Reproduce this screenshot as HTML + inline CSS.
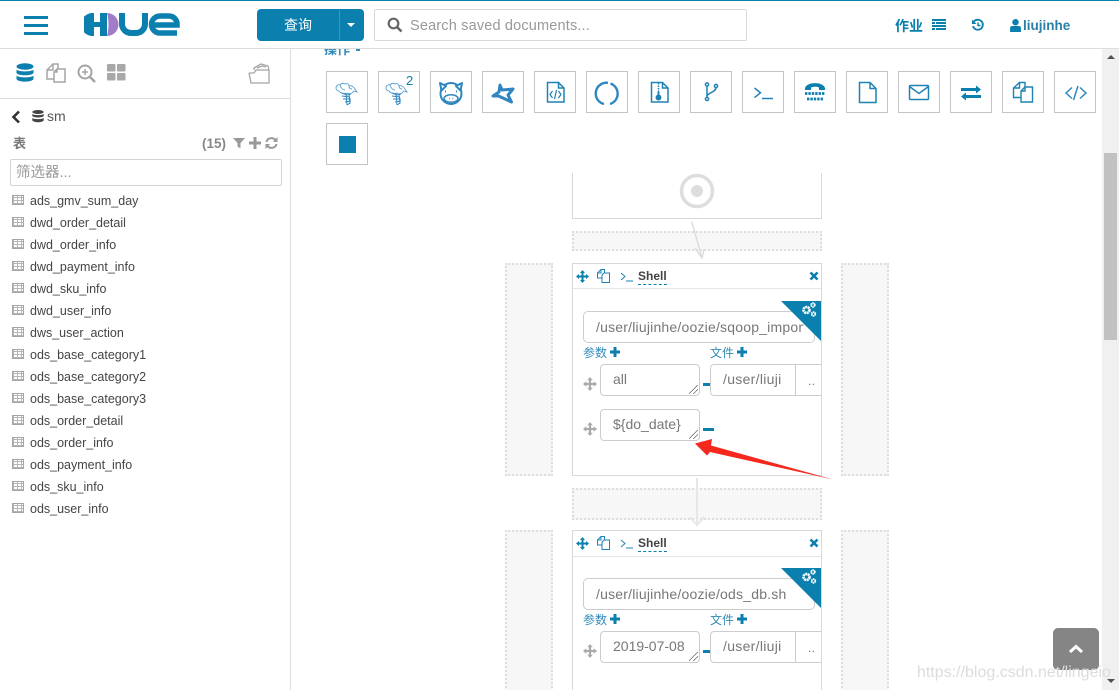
<!DOCTYPE html>
<html><head><meta charset="utf-8"><style>
*{box-sizing:border-box}
html,body{margin:0;padding:0;width:1119px;height:690px;overflow:hidden;background:#fff;font-family:"Liberation Sans","Noto Sans CJK SC",sans-serif;color:#666}
#wrap{position:absolute;left:0;top:0;width:1119px;height:690px;overflow:hidden;background:#fff}
.a{position:absolute}
.t{position:absolute;white-space:nowrap}
.btn{position:absolute;width:42px;height:42px;border:1px solid #c4c4c4;background:#fff}
.btn svg{position:absolute;left:0;top:0}
.row{position:absolute;left:30px;font-size:12.5px;color:#444;white-space:nowrap;line-height:16px}
.tb{position:absolute;left:12px;width:12px;height:10px;border:1px solid #a5a5a5;background:repeating-linear-gradient(0deg,#b5b5b5 0 1px,transparent 1px 3px),repeating-linear-gradient(90deg,#b5b5b5 0 1px,transparent 1px 4px)}
.dash{position:absolute;background:#f7f7f7;border:2px dotted #ddd}
.card{position:absolute;left:572px;width:250px;background:#fff;border:1px solid #d8d8d8;overflow:hidden}
.inp{position:absolute;background:#fff;border:1px solid #ccc;border-radius:4px;font-size:14px;color:#777;white-space:nowrap;overflow:hidden}
.grip{position:absolute;width:9px;height:9px;background:linear-gradient(135deg,transparent 45%,#666 45% 52%,transparent 52% 70%,#666 70% 77%,transparent 77%)}
.lbl{position:absolute;font-size:12px;color:#338bb8;white-space:nowrap}
.blue{color:#0b7fad}
</style></head><body><div id="wrap">

<!-- top bar -->
<div class="a" style="left:0;top:0;width:1119px;height:1px;background:#0b7fad"></div>
<div class="a" style="left:0;top:48px;width:1119px;height:1px;background:#ddd"></div>
<div class="a" style="left:24px;top:16px;width:24px;height:3px;background:#0b7fad"></div>
<div class="a" style="left:24px;top:24px;width:24px;height:3px;background:#0b7fad"></div>
<div class="a" style="left:24px;top:32px;width:24px;height:3px;background:#0b7fad"></div>

<!-- logo -->
<svg class="a" style="left:84px;top:13px" width="96" height="23" viewBox="0 0 96 23">
<path d="M10 .1A11.500 11.500 0 1 0 10 22.900Z" fill="#0b7fad"/>
<rect x="9" y="9" width="9" height="5" fill="#0b7fad"/>
<rect x="16" y="0" width="7" height="23" fill="#0b7fad"/>
<path d="M23 0A11.500 11.500 0 0 1 23 23C25 16 25 7 23 0Z" fill="#a27cc8"/>
<path d="M38 0V11A9 9 0 0 0 47 20H52A9 9 0 0 0 61 11V0" fill="none" stroke="#0b7fad" stroke-width="6"/>
<path d="M93 20H76A8.500 8.500 0 0 1 76 3H85A8 8 0 0 1 93 11V12H69" fill="none" stroke="#0b7fad" stroke-width="5.500"/>
</svg>

<!-- query btn -->
<div class="a" style="left:257px;top:9px;width:107px;height:32px;background:#0b7fad;border-radius:4px"></div>
<div class="a" style="left:339px;top:10px;width:1px;height:30px;background:#3a97bd"></div>
<div class="t" style="left:284px;top:16px;font-size:14px;color:#fff;line-height:18px">查询</div>
<div class="a" style="left:347px;top:23px;border-left:4px solid transparent;border-right:4px solid transparent;border-top:4px solid #fff"></div>

<!-- search -->
<div class="a" style="left:374px;top:9px;width:373px;height:32px;border:1px solid #d8d8d8;border-radius:2px"></div>
<svg class="a" style="left:387px;top:17px" width="17" height="16" viewBox="0 0 17 16"><circle cx="6.500" cy="6.500" r="4.800" fill="none" stroke="#666" stroke-width="2.200"/><path d="M10 10l4.500 4.500" stroke="#666" stroke-width="2.600"/></svg>
<div class="t" style="left:410px;top:17px;font-size:14.500px;letter-spacing:.17px;color:#999;line-height:18px">Search saved documents...</div>

<!-- right nav -->
<div class="t blue" style="left:895px;top:17px;font-size:14px;font-weight:bold;line-height:18px">作业</div>
<svg class="a" style="left:932px;top:19px" width="14" height="12" viewBox="0 0 14 12"><path d="M0 0h14v2H0zM0 3h3v2H0zM4 3h10v2H4zM0 6h14v2H0zM0 9h3v2H0zM4 9h10v2H4z" fill="#0b7fad"/></svg>
<svg class="a" style="left:971px;top:18px" width="14" height="14" viewBox="0 0 14 14"><path d="M3 3.500A5 5 0 1 1 2 8" fill="none" stroke="#0b7fad" stroke-width="1.800"/><path d="M1 1.500V6h4.500z" fill="#0b7fad"/><path d="M7 4.500V7.500H9.500" fill="none" stroke="#0b7fad" stroke-width="1.400"/></svg>
<svg class="a" style="left:1010px;top:19px" width="11" height="13" viewBox="0 0 10 12"><circle cx="5" cy="3" r="3" fill="#0b7fad"/><path d="M0 12V8.500Q0 6.500 2 6.500H8Q10 6.500 10 8.500V12Z" fill="#0b7fad"/></svg>
<div class="t" style="left:1023px;top:17px;font-size:13.500px;font-weight:bold;line-height:18px;color:#2a7fa8">liujinhe</div>

<!-- sidebar -->
<div class="a" style="left:290px;top:48px;width:1px;height:642px;background:#ddd"></div>
<div class="a" style="left:0;top:98px;width:290px;height:1px;background:#ddd"></div>

<svg class="a" style="left:16px;top:63px" width="18" height="20" viewBox="0 0 18 20"><ellipse cx="9" cy="3.500" rx="8.500" ry="3.200" fill="#0b7fad"/><path d="M.5 6.500C2 9 16 9 17.500 6.500V10C16 13 2 13 .5 10ZM.5 12.500C2 15 16 15 17.500 12.500V16C16 19.500 2 19.500 .5 16Z" fill="#0b7fad"/></svg>
<svg class="a" style="left:46px;top:63px" width="20" height="20" viewBox="0 0 20 20" fill="none" stroke="#a5a5a5" stroke-width="1.500"><path d="M9 16H1V7l6-6h5v5M7 1v6H1"/><path d="M11 6h8v13H8V9zM11 6v3H8" fill="#fff"/></svg>
<svg class="a" style="left:77px;top:64px" width="19" height="19" viewBox="0 0 19 19"><circle cx="8" cy="8" r="6.500" fill="none" stroke="#a5a5a5" stroke-width="2"/><path d="M5 8h6M8 5v6" stroke="#a5a5a5" stroke-width="1.500"/><path d="M13 13l5 5" stroke="#a5a5a5" stroke-width="2.500"/></svg>
<svg class="a" style="left:107px;top:64px" width="19" height="17" viewBox="0 0 19 17"><rect width="8.500" height="7.500" rx="1" fill="#a8a8a8"/><rect x="10" width="8.500" height="7.500" rx="1" fill="#a8a8a8"/><rect y="9" width="8.500" height="7.500" rx="1" fill="#a8a8a8"/><rect x="10" y="9" width="8.500" height="7.500" rx="1" fill="#a8a8a8"/></svg>
<svg class="a" style="left:248px;top:63px" width="23" height="21" viewBox="0 0 23 21" fill="none" stroke="#a5a5a5" stroke-width="1.300"><path d="M1 10l2 10h18V7"/><path d="M1 10h5l2-3h13"/><path d="M6 7V5l7-4 7 2 1 4"/><path d="M9 5l5-2 4 1"/></svg>

<svg class="a" style="left:11px;top:110px" width="10" height="14" viewBox="0 0 10 14"><path d="M8 1.500L2.500 7 8 12.500" fill="none" stroke="#333" stroke-width="2.600"/></svg>
<svg class="a" style="left:32px;top:110px" width="12" height="13" viewBox="0 0 12 13"><ellipse cx="6" cy="2" rx="5.700" ry="2" fill="#444"/><path d="M.3 4C2 5.500 10 5.500 11.700 4V6C10 8 2 8 .3 6ZM.3 8C2 9.500 10 9.500 11.700 8V10.500C10 12.800 2 12.800 .3 10.500Z" fill="#444"/></svg>
<div class="t" style="left:47px;top:108px;font-size:14px;color:#555;line-height:17px">sm</div>
<div class="t" style="left:13px;top:135px;font-size:13px;font-weight:bold;color:#777;line-height:17px">表</div>
<div class="t" style="left:202px;top:135px;font-size:13.500px;font-weight:bold;color:#888;line-height:17px">(15)</div>
<svg class="a" style="left:233px;top:137px" width="12" height="12" viewBox="0 0 12 12"><path d="M0 1h12L7.500 6v5.500L4.500 9.500V6z" fill="#999"/></svg>
<svg class="a" style="left:249px;top:137px" width="12" height="12" viewBox="0 0 12 12"><path d="M4.500 0h3v4.500H12v3H7.500V12h-3V7.500H0v-3h4.500z" fill="#999"/></svg>
<svg class="a" style="left:265px;top:137px" width="13" height="12" viewBox="0 0 13 12"><path d="M1.500 5A5 4.500 0 0 1 10.500 3M11.500 7A5 4.500 0 0 1 2.500 9" fill="none" stroke="#999" stroke-width="2"/><path d="M12.500 0V5H8zM.5 12V7H5z" fill="#999"/></svg>

<div class="a" style="left:10px;top:159px;width:272px;height:27px;border:1px solid #d4d4d4;border-radius:2px"></div>
<div class="t" style="left:16px;top:164px;font-size:14.500px;color:#999;line-height:18px">筛选器...</div>

<div class="tb" style="top:195px"></div><div class="row" style="top:193px">ads_gmv_sum_day</div>
<div class="tb" style="top:217px"></div><div class="row" style="top:215px">dwd_order_detail</div>
<div class="tb" style="top:239px"></div><div class="row" style="top:237px">dwd_order_info</div>
<div class="tb" style="top:261px"></div><div class="row" style="top:259px">dwd_payment_info</div>
<div class="tb" style="top:283px"></div><div class="row" style="top:281px">dwd_sku_info</div>
<div class="tb" style="top:305px"></div><div class="row" style="top:303px">dwd_user_info</div>
<div class="tb" style="top:327px"></div><div class="row" style="top:325px">dws_user_action</div>
<div class="tb" style="top:349px"></div><div class="row" style="top:347px">ods_base_category1</div>
<div class="tb" style="top:371px"></div><div class="row" style="top:369px">ods_base_category2</div>
<div class="tb" style="top:393px"></div><div class="row" style="top:391px">ods_base_category3</div>
<div class="tb" style="top:415px"></div><div class="row" style="top:413px">ods_order_detail</div>
<div class="tb" style="top:437px"></div><div class="row" style="top:435px">ods_order_info</div>
<div class="tb" style="top:459px"></div><div class="row" style="top:457px">ods_payment_info</div>
<div class="tb" style="top:481px"></div><div class="row" style="top:479px">ods_sku_info</div>
<div class="tb" style="top:503px"></div><div class="row" style="top:501px">ods_user_info</div>

<!-- clipped heading -->
<div class="a" style="left:324px;top:49px;width:50px;height:9px;overflow:hidden"><div class="t" style="left:0;top:-7px;font-size:13px;font-weight:bold;color:#338bb8;line-height:16px">操作</div><div class="a" style="left:32px;top:0;width:4px;height:2px;background:#338bb8"></div></div>

<!-- toolbar -->
<div class="btn" style="left:326px;top:71px"><svg width="40" height="40" viewBox="0 0 40 40" fill="none" stroke="#5a9fd0" stroke-width=".9"><path d="M9 16c0-2 2-4 4-3 1-2 4-2 5-1 2-1 4 0 4 2 2-1 5 1 6 3l2 3-3-1-2 2c-2 1-4 1-5 0-3 1-7 0-8-2-2 0-3-2-3-3z"/><path d="M13 13c1 3 3 5 5 5M22 14c0 2 1 3 3 3"/><path d="M15 21l5 2 4-1M15 24l8 1M16 27l8 0M18 30l6-1M20 33l3-2M19 21l1 12M22 22l1 10" stroke="#2f86c0" stroke-width="1"/></svg></div>
<div class="btn" style="left:378px;top:71px"><svg width="40" height="40" viewBox="0 0 40 40" fill="none" stroke="#5a9fd0" stroke-width=".9"><path d="M7 16c0-2 2-4 4-3 1-2 4-2 5-1 2-1 4 0 4 2 2-1 5 1 6 3l2 3-3-1-2 2c-2 1-4 1-5 0-3 1-7 0-8-2-2 0-3-2-3-3z"/><path d="M11 13c1 3 3 5 5 5M20 14c0 2 1 3 3 3"/><path d="M13 21l5 2 4-1M13 24l8 1M14 27l8 0M16 30l6-1M18 33l3-2M17 21l1 12M20 22l1 10" stroke="#2f86c0" stroke-width="1"/></svg><div class="t" style="left:27px;top:1px;font-size:13px;color:#0b7fad;line-height:15px">2</div></div>
<div class="btn" style="left:430px;top:71px"><svg width="40" height="40" viewBox="0 0 40 40" fill="none" stroke="#2f86c0" stroke-width="2"><circle cx="20" cy="21.500" r="10.500"/><path d="M9 11l6 3-4.500 4.500zM31 11l-6 3 4.500 4.500z" fill="#fff" stroke-linejoin="round"/><ellipse cx="20" cy="26.500" rx="7" ry="3.800" stroke-width="1.500"/><path d="M18 26.500h.8M21.500 26.500h.8" stroke-width="1.500"/><path d="M14 19.500h1M25 19.500h1"/></svg></div>
<div class="btn" style="left:482px;top:71px"><svg width="40" height="40" viewBox="0 0 40 40" fill="none" stroke="#2f86c0" stroke-width="3" stroke-linejoin="round"><path d="M17 13L19 18 30 17 25 23 28.500 30 21 26.500 15.500 24 10 24 16 20z"/></svg></div>
<div class="btn" style="left:534px;top:71px"><svg width="40" height="40" viewBox="0 0 40 40" fill="none" stroke="#1e82b4" stroke-width="1.500"><path d="M12.500 10.500h11l5.500 5.500v14H12.500z"/><path d="M23.500 10.500V16H29"/><path d="M17.500 19l-2.500 3.500 2.500 3.500M23.500 19l2.500 3.500-2.500 3.500M21.500 18l-2 9" stroke-width="1.200"/></svg></div>
<div class="btn" style="left:586px;top:71px"><svg width="40" height="40" viewBox="0 0 40 40" fill="none" stroke="#2f86c0" stroke-width="2.400"><path d="M23.500 11.500A10.800 10.800 0 0 1 23 32"/><path d="M17 32A10.800 10.800 0 0 1 21 10.800"/></svg></div>
<div class="btn" style="left:638px;top:71px"><svg width="40" height="40" viewBox="0 0 40 40" fill="none" stroke="#1e82b4" stroke-width="1.500"><path d="M12.500 10.500h11l5.500 5.500v14H12.500z"/><path d="M23.500 10.500V16H29"/><path d="M19.500 11v9" stroke-dasharray="1.500 1"/><circle cx="19.500" cy="25.500" r="2.200" fill="#1e82b4"/><path d="M19.500 20v4" stroke-width="2"/></svg></div>
<div class="btn" style="left:690px;top:71px"><svg width="40" height="40" viewBox="0 0 40 40" fill="none" stroke="#1e82b4" stroke-width="1.500"><circle cx="16" cy="12.500" r="1.600"/><circle cx="16" cy="27" r="1.600"/><circle cx="25" cy="14" r="1.600"/><path d="M16 14v11.500M25 15.600c0 4.500-8 5-9 8.500"/></svg></div>
<div class="btn" style="left:742px;top:71px"><svg width="40" height="40" viewBox="0 0 40 40" fill="none" stroke="#1e82b4" stroke-width="1.500"><path d="M11.500 16l6 4.800-6 4.800"/><path d="M19 26.500h11" stroke-width="1.500"/></svg></div>
<div class="btn" style="left:794px;top:71px"><svg width="40" height="40" viewBox="0 0 40 40"><path d="M10 18v-2c2-6.500 18-6.500 20 0v2h-6v-2.500c-2-1-6-1-8 0V18z" fill="#0b7fad"/><path d="M10 21.500h20M12 27h16" stroke="#0b7fad" stroke-width="2.800" stroke-dasharray="2.400 1"/></svg></div>
<div class="btn" style="left:846px;top:71px"><svg width="40" height="40" viewBox="0 0 40 40" fill="none" stroke="#1e82b4" stroke-width="1.500"><path d="M12.500 10.500h10.500l6 6v14H12.500z"/><path d="M23 10.500v6h6"/></svg></div>
<div class="btn" style="left:898px;top:71px"><svg width="40" height="40" viewBox="0 0 40 40" fill="none" stroke="#1e82b4" stroke-width="1.500"><rect x="10.500" y="13.500" width="19" height="14" rx="1"/><path d="M10.500 14.500l9.500 7 9.500-7"/></svg></div>
<div class="btn" style="left:950px;top:71px"><svg width="40" height="40" viewBox="0 0 40 40" fill="#0b7fad"><path d="M10 16h15v-2.500l5 4-5 4V19H10zM30 23H15v-2.500l-5 4 5 4V26h15z"/></svg></div>
<div class="btn" style="left:1002px;top:71px"><svg width="40" height="40" viewBox="0 0 40 40" fill="none" stroke="#1e82b4" stroke-width="1.400"><path d="M18 25.500h-7.500V16l6-5.500h5.500V15M16.500 10.500V16h-6"/><path d="M22 15h7.500v15H18V19zM22 15v4h-4" fill="#fff"/></svg></div>
<div class="btn" style="left:1054px;top:71px"><svg width="40" height="40" viewBox="0 0 40 40" fill="none" stroke="#2f86c0" stroke-width="1.500"><path d="M17 15.500l-6 5.500 6 5.500M25 15.500l6 5.500-6 5.500M23 14l-4.500 14"/></svg></div>
<div class="btn" style="left:326px;top:123px"><div class="a" style="left:12px;top:12px;width:17px;height:17px;background:#0b7fad"></div></div>

<!-- flow: top -->
<div class="a" style="left:572px;top:173px;width:250px;height:46px;border:1px solid #d8d8d8;border-top:0"></div>
<svg class="a" style="left:679px;top:173px" width="36" height="36" viewBox="0 0 36 36"><circle cx="18" cy="18" r="15.500" fill="none" stroke="#ddd" stroke-width="3.500"/><circle cx="18" cy="18" r="6" fill="#ddd"/></svg>
<div class="dash" style="left:572px;top:231px;width:250px;height:20px"></div>
<svg class="a" style="left:685px;top:220px" width="22" height="41" viewBox="0 0 22 41" fill="none" stroke="#ddd" stroke-width="1.500"><path d="M6.700 1.700L17 38M10 28l7 10 2-9"/></svg>

<div class="dash" style="left:505px;top:263px;width:48px;height:213px"></div>
<div class="dash" style="left:841px;top:263px;width:48px;height:213px"></div>

<!-- card 1 -->
<div class="card" style="top:263px;height:213px">
  <div class="a" style="left:0;top:24px;width:250px;height:1px;background:#e5e5e5"></div>
  <svg class="a" style="left:3px;top:6px" width="13" height="13" viewBox="0 0 13 13"><path d="M6.500 0l2.500 3H7.500v2.500H10V4l3 2.500L10 9V7.500H7.500V10H9l-2.500 3L4 10h1.500V7.500H3V9L0 6.500 3 4v1.500h2.500V3H4z" fill="#0b7fad"/></svg>
  <svg class="a" style="left:24px;top:5px" width="13" height="14" viewBox="0 0 13 14" fill="none" stroke="#1e82b4"><path d="M5 9H.5V4L4 .5h3.500V4M4 .5V4H.5"/><path d="M7 4h5.500v9.500H5V6z" fill="#fff"/></svg>
  <svg class="a" style="left:47px;top:7px" width="13" height="11" viewBox="0 0 13 11" fill="none" stroke="#1e82b4"><path d="M1 2l4 3.500L1 9"/><path d="M6 10h7"/></svg>
  <div class="t" style="left:65px;top:5px;font-size:12px;font-weight:bold;color:#444;line-height:15px;border-bottom:1px dashed #0b7fad">Shell</div>
  <svg class="a" style="left:236px;top:7px" width="10" height="10" viewBox="0 0 10 10"><path d="M1.500 1.500l7 7M8.500 1.500l-7 7" stroke="#0b7fad" stroke-width="2.600"/></svg>
  <div class="inp" style="left:10px;top:47px;width:232px;height:32px;padding:7px 12px;line-height:16px;border-radius:5px;letter-spacing:.2px"><span style="display:block;width:208px;overflow:hidden">/user/liujinhe/oozie/sqoop_import</span></div>
  <div class="a" style="left:208px;top:37px;width:40px;height:40px;background:#0b7fad;clip-path:polygon(0 0,100% 0,100% 100%)"></div>
  <svg class="a" style="left:228px;top:38px" width="16" height="15" viewBox="0 0 16 15" fill="none" stroke="#fff"><circle cx="5.500" cy="8" r="3" stroke-width="2.600" stroke-dasharray="2 .5"/><circle cx="12" cy="3" r="1.800" stroke-width="1.800" stroke-dasharray="1.500 .4"/><circle cx="12.500" cy="12" r="1.800" stroke-width="1.800" stroke-dasharray="1.500 .4"/></svg>
  <div class="lbl" style="left:10px;top:80px">参数</div>
  <div class="lbl" style="left:137px;top:80px">文件</div>
  <svg class="a" style="left:37px;top:83px" width="10" height="10" viewBox="0 0 10 10"><path d="M3.500 0h3v3.500H10v3H6.500V10h-3V6.500H0v-3h3.500z" fill="#0b7fad"/></svg>
  <svg class="a" style="left:164px;top:83px" width="10" height="10" viewBox="0 0 10 10"><path d="M3.500 0h3v3.500H10v3H6.500V10h-3V6.500H0v-3h3.500z" fill="#0b7fad"/></svg>
  <svg class="a" style="left:10px;top:113px" width="14" height="14" viewBox="0 0 13 13"><path d="M6.500 0l2.500 3H7.500v2.500H10V4l3 2.500L10 9V7.500H7.500V10H9l-2.500 3L4 10h1.500V7.500H3V9L0 6.500 3 4v1.500h2.500V3H4z" fill="#aaa"/></svg>
  <div class="inp" style="left:27px;top:100px;width:100px;height:32px;padding:6px 12px;line-height:16px">all<div class="grip" style="right:1px;bottom:1px"></div></div>
  <div class="a" style="left:130px;top:119px;width:8px;height:3px;background:#0b7fad"></div>
  <div class="inp" style="left:137px;top:100px;width:120px;height:32px;padding:6px 12px;line-height:16px;letter-spacing:.3px">/user/liuji<div class="a" style="left:84px;top:0;width:1px;height:30px;background:#ccc"></div><div class="a" style="left:97px;top:8px;color:#338bb8;line-height:16px;font-size:12px">..</div></div>
  <svg class="a" style="left:10px;top:158px" width="14" height="14" viewBox="0 0 13 13"><path d="M6.500 0l2.500 3H7.500v2.500H10V4l3 2.500L10 9V7.500H7.500V10H9l-2.500 3L4 10h1.500V7.500H3V9L0 6.500 3 4v1.500h2.500V3H4z" fill="#aaa"/></svg>
  <div class="inp" style="left:27px;top:145px;width:100px;height:32px;padding:6px 12px;line-height:16px">${do_date}<div class="grip" style="right:1px;bottom:1px"></div></div>
  <div class="a" style="left:130px;top:164px;width:11px;height:3px;background:#0b7fad"></div>
</div>

<!-- flow: middle -->
<div class="dash" style="left:572px;top:488px;width:250px;height:32px"></div>
<svg class="a" style="left:687px;top:477px" width="20" height="50" viewBox="0 0 20 50" fill="none" stroke="#e6e6e6" stroke-width="2"><path d="M10 1v47M3 40l7 8 7-8"/></svg>

<div class="dash" style="left:505px;top:530px;width:48px;height:170px"></div>
<div class="dash" style="left:841px;top:530px;width:48px;height:170px"></div>

<!-- card 2 -->
<div class="card" style="top:530px;height:170px">
  <div class="a" style="left:0;top:25px;width:250px;height:1px;background:#e5e5e5"></div>
  <svg class="a" style="left:3px;top:6px" width="13" height="13" viewBox="0 0 13 13"><path d="M6.500 0l2.500 3H7.500v2.500H10V4l3 2.500L10 9V7.500H7.500V10H9l-2.500 3L4 10h1.500V7.500H3V9L0 6.500 3 4v1.500h2.500V3H4z" fill="#0b7fad"/></svg>
  <svg class="a" style="left:24px;top:5px" width="13" height="14" viewBox="0 0 13 14" fill="none" stroke="#1e82b4"><path d="M5 9H.5V4L4 .5h3.500V4M4 .5V4H.5"/><path d="M7 4h5.500v9.500H5V6z" fill="#fff"/></svg>
  <svg class="a" style="left:47px;top:7px" width="13" height="11" viewBox="0 0 13 11" fill="none" stroke="#1e82b4"><path d="M1 2l4 3.500L1 9"/><path d="M6 10h7"/></svg>
  <div class="t" style="left:65px;top:5px;font-size:12px;font-weight:bold;color:#444;line-height:15px;border-bottom:1px dashed #0b7fad">Shell</div>
  <svg class="a" style="left:236px;top:7px" width="10" height="10" viewBox="0 0 10 10"><path d="M1.500 1.500l7 7M8.500 1.500l-7 7" stroke="#0b7fad" stroke-width="2.600"/></svg>
  <div class="inp" style="left:10px;top:47px;width:232px;height:32px;padding:7px 12px;line-height:16px;border-radius:5px;letter-spacing:.2px">/user/liujinhe/oozie/ods_db.sh</div>
  <div class="a" style="left:208px;top:37px;width:40px;height:40px;background:#0b7fad;clip-path:polygon(0 0,100% 0,100% 100%)"></div>
  <svg class="a" style="left:228px;top:38px" width="16" height="15" viewBox="0 0 16 15" fill="none" stroke="#fff"><circle cx="5.500" cy="8" r="3" stroke-width="2.600" stroke-dasharray="2 .5"/><circle cx="12" cy="3" r="1.800" stroke-width="1.800" stroke-dasharray="1.500 .4"/><circle cx="12.500" cy="12" r="1.800" stroke-width="1.800" stroke-dasharray="1.500 .4"/></svg>
  <div class="lbl" style="left:10px;top:80px">参数</div>
  <div class="lbl" style="left:137px;top:80px">文件</div>
  <svg class="a" style="left:37px;top:83px" width="10" height="10" viewBox="0 0 10 10"><path d="M3.500 0h3v3.500H10v3H6.500V10h-3V6.500H0v-3h3.500z" fill="#0b7fad"/></svg>
  <svg class="a" style="left:164px;top:83px" width="10" height="10" viewBox="0 0 10 10"><path d="M3.500 0h3v3.500H10v3H6.500V10h-3V6.500H0v-3h3.500z" fill="#0b7fad"/></svg>
  <svg class="a" style="left:10px;top:113px" width="14" height="14" viewBox="0 0 13 13"><path d="M6.500 0l2.500 3H7.500v2.500H10V4l3 2.500L10 9V7.500H7.500V10H9l-2.500 3L4 10h1.500V7.500H3V9L0 6.500 3 4v1.500h2.500V3H4z" fill="#aaa"/></svg>
  <div class="inp" style="left:27px;top:100px;width:100px;height:32px;padding:6px 12px;line-height:16px">2019-07-08<div class="grip" style="right:1px;bottom:1px"></div></div>
  <div class="a" style="left:130px;top:119px;width:8px;height:3px;background:#0b7fad"></div>
  <div class="inp" style="left:137px;top:100px;width:120px;height:32px;padding:6px 12px;line-height:16px;letter-spacing:.3px">/user/liuji<div class="a" style="left:84px;top:0;width:1px;height:30px;background:#ccc"></div><div class="a" style="left:97px;top:8px;color:#338bb8;line-height:16px;font-size:12px">..</div></div>
</div>

<!-- red arrow -->
<svg class="a" style="left:690px;top:435px" width="150" height="50" viewBox="0 0 150 50"><path d="M5 8.500L22 4 21 10.500 143 44.500 20 17 17 20.500z" fill="#f5281e"/></svg>

<!-- scrollbar -->
<div class="a" style="left:1102px;top:49px;width:17px;height:641px;background:#f0f0f0"></div>
<div class="a" style="left:1107px;top:55px;border-left:4px solid transparent;border-right:4px solid transparent;border-bottom:4px solid #505050"></div>
<div class="a" style="left:1104px;top:153px;width:13px;height:187px;background:#c1c1c1"></div>
<div class="a" style="left:1107px;top:679px;border-left:4px solid transparent;border-right:4px solid transparent;border-top:4px solid #505050"></div>

<!-- back to top -->
<div class="a" style="left:1053px;top:628px;width:46px;height:42px;background:#858585;border-radius:5px"></div>
<svg class="a" style="left:1068px;top:643px" width="16" height="11" viewBox="0 0 16 11"><path d="M2 9l6-5.500L14 9" fill="none" stroke="#fff" stroke-width="3"/></svg>
<div class="t" style="left:917px;top:663px;font-size:16px;color:#dcdcdc;line-height:20px">https://blog.csdn.net/lingeio</div>
</div></body></html>
